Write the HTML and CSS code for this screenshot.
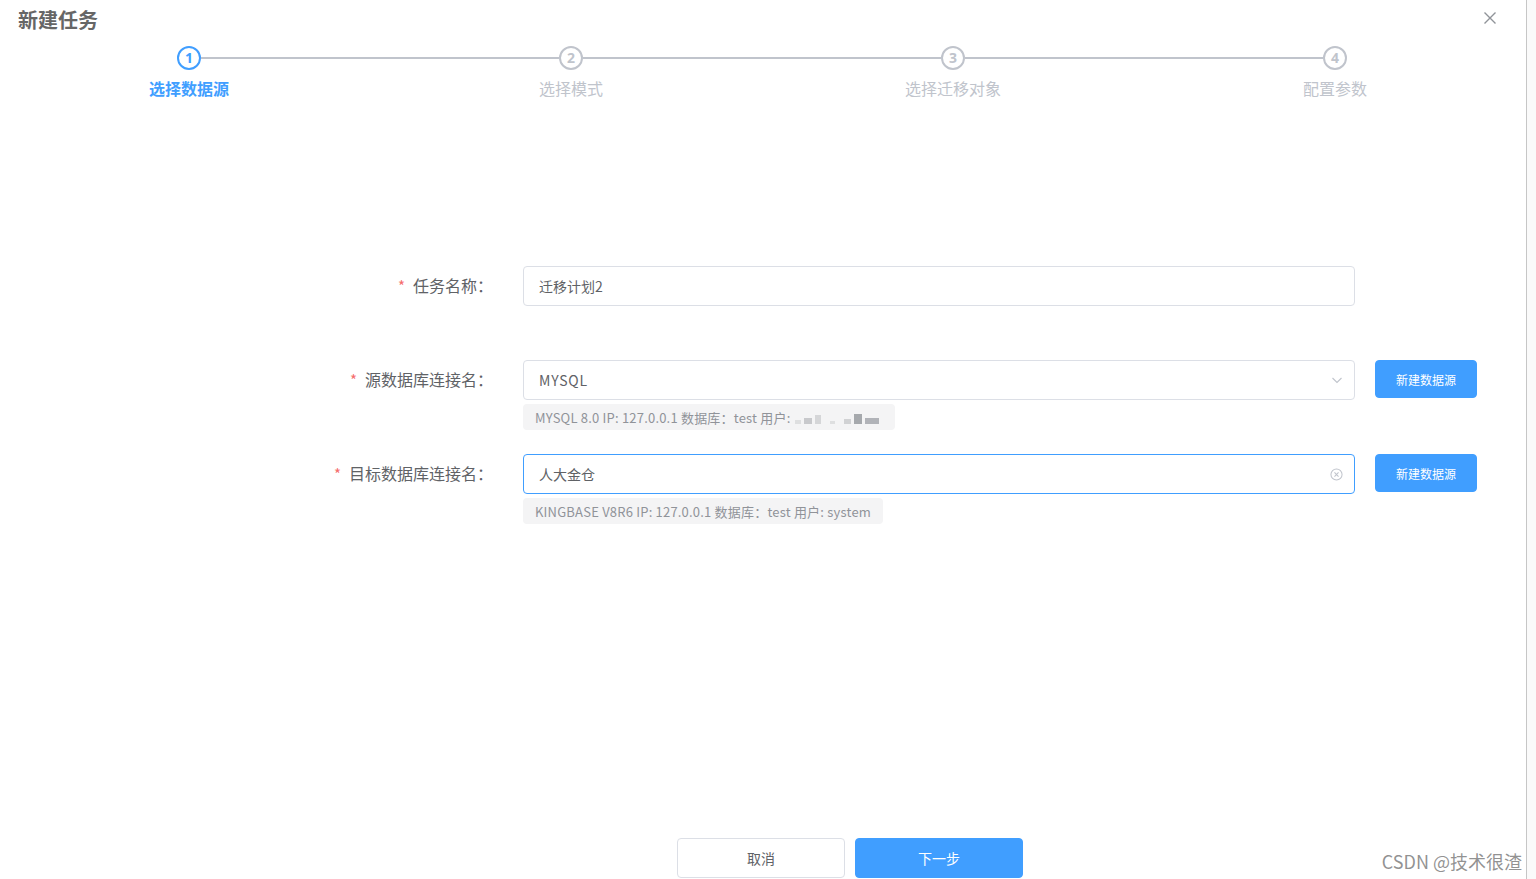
FILE: index.html
```html
<!DOCTYPE html>
<html lang="zh-CN">
<head>
<meta charset="utf-8">
<title>新建任务</title>
<link rel="stylesheet" href="styles.css">
</head>
<body>
<div class="app">
  <div class="dialog">
    <header class="dlg-head">
      <h1 class="dlg-title">新建任务</h1>
      <span class="dlg-close">
        <svg width="12" height="12" viewBox="0 0 12 12"><path d="M0.5 0.5 L11.5 11.5 M11.5 0.5 L0.5 11.5" stroke="#909399" stroke-width="1.4" fill="none"/></svg>
      </span>
    </header>

    <div class="steps">
      <div class="step active first">
        <div class="step-head"><span class="line"></span><span class="circle">1</span><span class="line"></span></div>
        <div class="step-title">选择数据源</div>
      </div>
      <div class="step">
        <div class="step-head"><span class="line"></span><span class="circle">2</span><span class="line"></span></div>
        <div class="step-title">选择模式</div>
      </div>
      <div class="step">
        <div class="step-head"><span class="line"></span><span class="circle">3</span><span class="line"></span></div>
        <div class="step-title">选择迁移对象</div>
      </div>
      <div class="step last">
        <div class="step-head"><span class="line"></span><span class="circle">4</span><span class="line"></span></div>
        <div class="step-title">配置参数</div>
      </div>
    </div>

    <div class="form">
      <div class="form-row row-name">
        <label class="form-label"><span class="req">*</span>任务名称：</label>
        <div class="form-control">
          <div class="input"><span class="input-text">迁移计划2</span></div>
        </div>
      </div>

      <div class="form-row row-src">
        <label class="form-label"><span class="req">*</span>源数据库连接名：</label>
        <div class="form-control">
          <div class="input"><span class="input-text latin">MYSQL</span>
            <svg class="suffix" width="12" height="12" viewBox="0 0 12 12"><path d="M1.5 4 L6 8.5 L10.5 4" stroke="#c0c4cc" stroke-width="1.1" fill="none"/></svg>
          </div>
          <div class="hint">MYSQL 8.0 IP: 127.0.0.1 数据库：test 用户:<span class="mosaic"><i class="m1"></i><i class="m2"></i><i class="m3"></i><i class="m4"></i><i class="m5"></i><i class="m6"></i><i class="m7"></i></span></div>
        </div>
        <button class="btn-primary btn-small">新建数据源</button>
      </div>

      <div class="form-row row-dst">
        <label class="form-label"><span class="req">*</span>目标数据库连接名：</label>
        <div class="form-control">
          <div class="input focused"><span class="input-text">人大金仓</span>
            <svg class="suffix" width="13" height="13" viewBox="0 0 14 14"><circle cx="7" cy="7" r="6" stroke="#c0c4cc" stroke-width="1.1" fill="none"/><path d="M4.8 4.8 L9.2 9.2 M9.2 4.8 L4.8 9.2" stroke="#c0c4cc" stroke-width="1.1"/></svg>
          </div>
          <div class="hint">KINGBASE V8R6 IP: 127.0.0.1 数据库：test 用户: system</div>
        </div>
        <button class="btn-primary btn-small">新建数据源</button>
      </div>
    </div>

    <div class="footer">
      <button class="btn-default">取消</button>
      <button class="btn-primary btn-large">下一步</button>
    </div>

    <div class="watermark">CSDN @技术很渣</div>
  </div>
  <div class="gutter"></div>
</div>
</body>
</html>
```

FILE: styles.css
```css
* { box-sizing: border-box; }
html, body { margin: 0; padding: 0; }
body {
  font-family: "Noto Sans CJK SC", "Noto Sans", sans-serif;
  color: #606266;
  background: #fff;
}
.app {
  display: flex;
  width: 1536px;
  height: 879px;
  overflow: hidden;
}
.dialog {
  position: relative;
  width: 1526px;
  height: 879px;
  display: flex;
  flex-direction: column;
  background: #fff;
}
.gutter {
  width: 10px;
  border-left: 1px solid #c6c6c6;
  background: #fafafa;
}

/* header */
.dlg-head {
  height: 40px;
  display: flex;
  justify-content: space-between;
  align-items: flex-start;
  padding: 0 30px 0 18px;
}
.dlg-title {
  margin: 0;
  font-size: 20px;
  line-height: 40px;
  font-weight: 700;
  color: #666;
}
.dlg-close {
  display: block;
  width: 12px;
  height: 12px;
  margin-top: 12px;
}
.dlg-close svg { display: block; }

/* steps */
.steps {
  display: grid;
  grid-template-columns: repeat(4, 382px);
  margin: 6px 0 0 -2px;
}
.step { display: flex; flex-direction: column; align-items: stretch; }
.step-head {
  display: flex;
  align-items: center;
  height: 24px;
}
.step-head .line {
  flex: 1;
  height: 2px;
  background: #c0c4cc;
}
.step.first .step-head .line:first-child,
.step.last .step-head .line:last-child { background: transparent; }
.circle {
  width: 24px;
  height: 24px;
  border: 2px solid #c0c4cc;
  border-radius: 50%;
  color: #c0c4cc;
  font-size: 14px;
  font-weight: 700;
  line-height: 20px;
  text-align: center;
  font-family: "Noto Sans", "Noto Sans CJK SC", sans-serif;
}
.step-title {
  text-align: center;
  font-size: 16px;
  line-height: 36px;
  color: #c0c4cc;
}
.step.active .circle { border-color: #409eff; color: #409eff; }
.step.active .step-title { color: #409eff; font-weight: 700; }

/* form */
.form {
  margin-top: 160px;
  display: flex;
  flex-direction: column;
}
.form-row {
  display: flex;
  align-items: flex-start;
}
.row-src { margin-top: 54px; }
.row-dst { margin-top: 24px; }
.form-label {
  width: 493px;
  height: 40px;
  text-align: right;
  font-size: 16px;
  line-height: 39px;
  color: #606266;
  white-space: nowrap;
}
.req {
  color: #f56c6c;
  margin-right: 8px;
  font-size: 15px;
}
.form-control {
  width: 832px;
  margin-left: 30px;
}
.input {
  height: 40px;
  border: 1px solid #dcdfe6;
  border-radius: 4px;
  display: flex;
  align-items: center;
  justify-content: space-between;
  padding: 0 11px 0 15px;
  font-size: 14px;
  color: #606266;
}
.input-text.latin { letter-spacing: 0.8px; }
.input.focused { border-color: #409eff; }
.suffix { display: block; }
.hint {
  display: inline-flex;
  align-items: center;
  margin-top: 4px;
  height: 26px;
  padding: 0 12px;
  background: #f4f4f5;
  border-radius: 4px;
  font-size: 13px;
  letter-spacing: 0.2px;
  color: #909399;
  white-space: nowrap;
}
.mosaic {
  display: inline-flex;
  align-items: flex-end;
  gap: 3px;
  width: 88px;
  height: 14px;
  margin-left: 4px;
}
.mosaic i { display: block; background: #c8c9cc; }
.mosaic .m1 { width: 6px; height: 4px; opacity: .5; }
.mosaic .m2 { width: 8px; height: 6px; }
.mosaic .m3 { width: 6px; height: 9px; opacity: .7; }
.mosaic .m4 { width: 5px; height: 3px; opacity: .5; margin-left: 6px; }
.mosaic .m5 { width: 7px; height: 5px; opacity: .8; margin-left: 6px; }
.mosaic .m6 { width: 8px; height: 10px; background: #a6a9ad; }
.mosaic .m7 { width: 14px; height: 6px; background: #b1b3b8; }

.btn-primary {
  background: #409eff;
  color: #fff;
  border: 1px solid #409eff;
  border-radius: 4px;
  font-family: inherit;
  cursor: pointer;
}
.btn-small {
  width: 102px;
  height: 38px;
  margin-left: 20px;
  font-size: 12px;
  padding: 0;
}
.footer {
  margin-top: auto;
  margin-bottom: 1px;
  display: flex;
  gap: 10px;
  padding-left: 677px;
}
.btn-default {
  width: 168px;
  height: 40px;
  background: #fff;
  border: 1px solid #dcdfe6;
  border-radius: 4px;
  color: #606266;
  font-size: 14px;
  font-family: inherit;
}
.btn-large {
  width: 168px;
  height: 40px;
  font-size: 14px;
}
.watermark {
  position: absolute;
  right: 4px;
  bottom: 8px;
  font-size: 18px;
  line-height: 20px;
  color: rgba(110, 110, 110, 0.75);
  font-family: "Noto Sans CJK SC", "Noto Sans", sans-serif;
}
```
